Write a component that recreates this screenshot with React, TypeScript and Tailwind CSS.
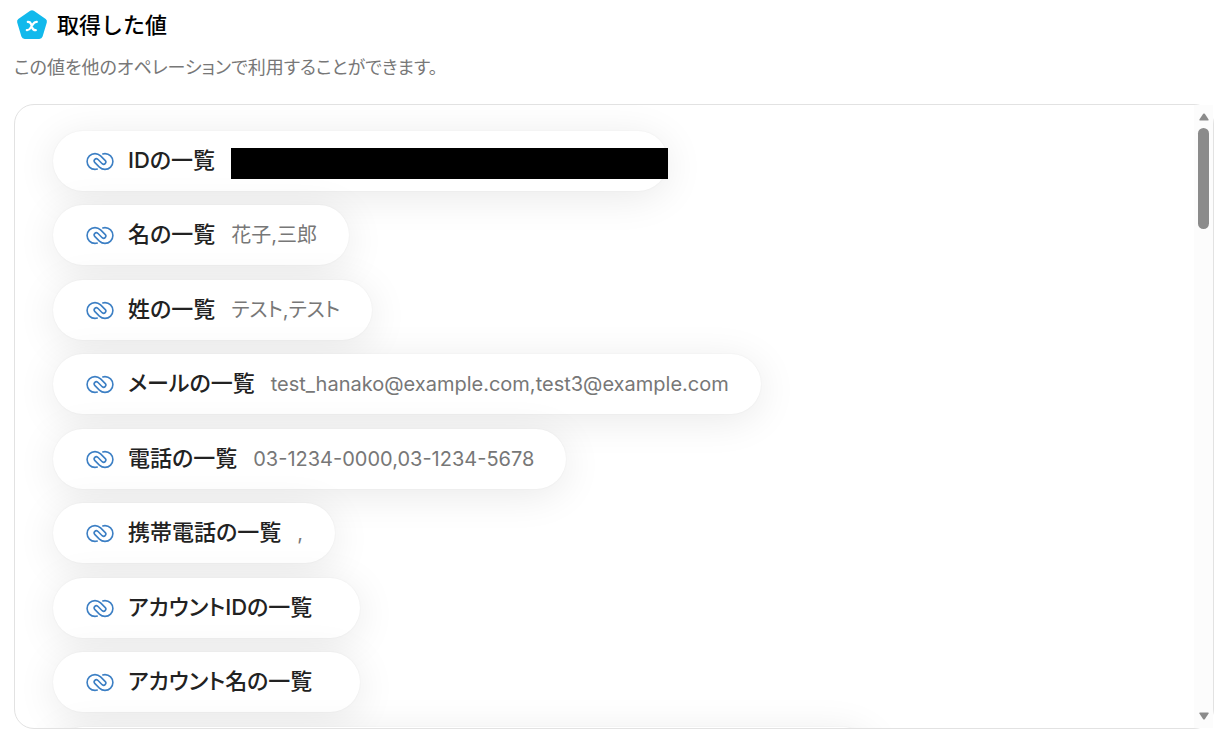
import React from 'react';

interface FieldValue {
  label: string;
  value?: string;
  masked?: boolean;
}

const fields: FieldValue[] = [
  { label: 'IDの一覧', masked: true },
  { label: '名の一覧', value: '花子,三郎' },
  { label: '姓の一覧', value: 'テスト,テスト' },
  { label: 'メールの一覧', value: 'test_hanako@example.com,test3@example.com' },
  { label: '電話の一覧', value: '03-1234-0000,03-1234-5678' },
  { label: '携帯電話の一覧', value: ',' },
  { label: 'アカウントIDの一覧' },
  { label: 'アカウント名の一覧' },
];

function VariableIcon() {
  return (
    <svg viewBox="0 0 32 32" className="w-8 h-8 shrink-0" aria-hidden="true">
      <path
        d="M14.2 1.8Q16 .5 17.8 1.8L29.7 10.1Q31.4 11.4 30.8 13.4L26.6 27.6Q25.8 30 23.3 30H8.7Q6.2 30 5.4 27.6L1.2 13.4Q.6 11.4 2.3 10.1Z"
        fill="#12b9ec"
      />
      <path
        d="M11.8 12.8C14 12.6 14.6 13.6 15.2 15.4L16.2 18.6C16.8 20.6 17.6 21.3 19.8 21.2M20.8 12.9C18.8 12.7 17.8 13.8 16.8 15.4L14.6 18.8C13.6 20.6 12.6 21.4 10.8 21.2"
        fill="none"
        stroke="#fff"
        strokeWidth="2.2"
        strokeLinecap="round"
      />
    </svg>
  );
}

function LinkIcon() {
  return (
    <svg
      viewBox="0 0 28 20"
      className="w-7 h-5 shrink-0"
      fill="none"
      stroke="#3c7fc4"
      strokeWidth="1.6"
      strokeLinecap="round"
      strokeLinejoin="round"
      aria-hidden="true"
    >
      <path d="M11.2 18.1C10.5 18.3 9.8 18.4 9 18.4A7.9 7.9 0 0 1 9 2.6C11.2 2.6 13.1 3.5 14.6 4.9L19.3 9.6A2.2 2.2 0 0 1 16.2 12.7L11.8 8.3A2.2 2.2 0 0 0 8.7 11.4L13.4 16.1C14.9 17.5 16.8 18.4 19 18.4A7.9 7.9 0 0 0 19 2.6C18.2 2.6 17.5 2.7 16.8 2.9" />
    </svg>
  );
}

function FieldPill({ label, value, masked }: FieldValue) {
  return (
    <li className="odd:mb-[14px] even:mb-[15px] w-fit h-[60px] pl-[33px] pr-8 flex items-center rounded-full bg-white shadow-[0_6px_40px_rgba(0,0,0,0.090),0_0_2px_rgba(0,0,0,0.060)]">
      <LinkIcon />
      <span className="ml-[14px] mr-4 pb-0.5 text-[22px] leading-8 font-medium text-[#222] whitespace-nowrap">
        {label}
      </span>
      {masked && <span className="w-[437px] h-[31px] mt-1 -mr-8 bg-black" />}
      {value && (
        <span className="text-[20px] leading-7 text-[#777] whitespace-nowrap">{value}</span>
      )}
    </li>
  );
}

function ScrollTrack() {
  return (
    <div className="w-[19px] shrink-0 pt-2 pb-2 flex flex-col items-center bg-[#fcfcfc]" aria-hidden="true">
      <svg viewBox="0 0 10 8" className="w-[10px] h-2">
        <path d="M4.2 .8Q5 0 5.8 .8L9.6 6.5Q10 7.6 9 7.6H1Q0 7.6 .4 6.5Z" fill="#8b8b8b" />
      </svg>
      <div className="w-[11px] h-[101px] mt-[7px] rounded-full bg-[#8b8b8b]" />
      <svg viewBox="0 0 10 8" className="w-[10px] h-2 mt-auto">
        <path d="M4.2 7.2Q5 8 5.8 7.2L9.6 1.5Q10 .4 9 .4H1Q0 .4 .4 1.5Z" fill="#8b8b8b" />
      </svg>
    </div>
  );
}

export default function App() {
  return (
    <main
      lang="ja"
      className="h-screen pt-[9px] pb-px px-[14px] flex flex-col bg-white font-[Inter,'Noto_Sans_CJK_JP',sans-serif]"
    >
      <header className="pl-[2px] flex items-center gap-[9px]">
        <VariableIcon />
        <h1 className="text-[22px] leading-8 font-medium text-black">取得した値</h1>
      </header>
      <p className="mt-[15px] text-[18px] leading-6 text-[#777] [font-feature-settings:'palt']">
        この値を他のオペレーションで利用することができます。
      </p>
      <section className="mt-6 flex-1 min-h-0 flex rounded-[20px] border border-[#e2e2e2] [font-feature-settings:'palt']">
        <ul className="flex-1 min-w-0 pt-[26px] pl-[38px] overflow-y-auto [scrollbar-width:none] rounded-l-[19px]">
          {fields.map((field) => (
            <FieldPill key={field.label} {...field} />
          ))}
          <li className="w-[820px] h-[60px] rounded-full bg-white shadow-[0_6px_40px_rgba(0,0,0,0.090),0_0_2px_rgba(0,0,0,0.060)]" />
        </ul>
        <ScrollTrack />
      </section>
    </main>
  );
}
